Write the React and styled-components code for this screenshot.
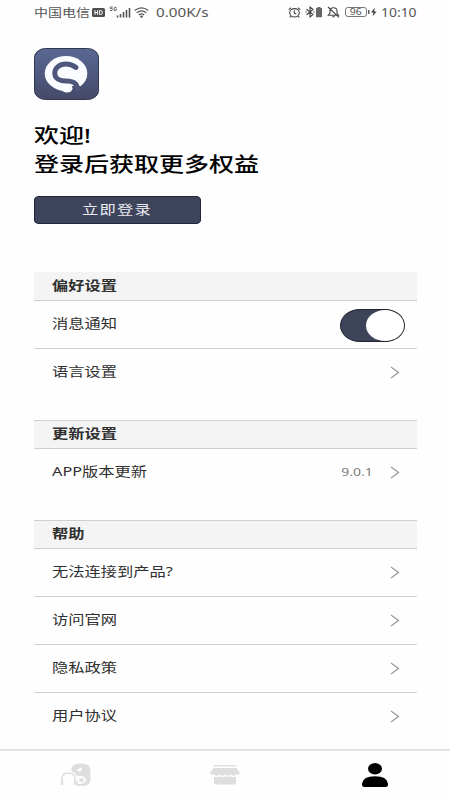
import React, { useState } from 'react';
import styled, { createGlobalStyle } from 'styled-components';

const GlobalStyle = createGlobalStyle`
  * {
    box-sizing: border-box;
  }

  body {
    margin: 0;
    background-color: #fefefe;
    font-family: 'Noto Sans', 'Noto Sans CJK SC', sans-serif;
    color: #303030;
  }
`;

const Screen = styled.div`
  display: flex;
  flex-direction: column;
  width: 450px;
  height: 800px;
  overflow: hidden;
`;

// wide lettering: the glyphs are stretched sideways from one edge
const Wide = styled.span`
  display: block;
  white-space: nowrap;
  transform: scaleX(${(props) => props.$scale || 1.25});
  transform-origin: ${(props) => props.$origin || 'left'} center;
`;

const StatusBar = styled.div`
  display: flex;
  flex-shrink: 0;
  justify-content: space-between;
  align-items: center;
  height: 25px;
  padding: 0 34px 1px 34px;
  font-size: 11.2px;
  color: #555;
`;

const StatusGroup = styled.div`
  display: flex;
  align-items: center;
  height: 100%;
`;

const StatusText = styled.div`
  width: ${(props) => props.$width}px;
  margin-left: ${(props) => props.$gap || 0}px;
  font-size: ${(props) => props.$size || 11.2}px;
`;

const StatusIcon = styled.svg`
  display: block;
  flex-shrink: 0;
  margin-left: ${(props) => props.$gap || 0}px;
`;

const Main = styled.main`
  flex: 1;
  min-height: 0;
  padding: 23px 33px 0 34px;
`;

const Logo = styled.svg`
  display: block;
  width: 65px;
  height: 52px;
`;

const Welcome = styled.h1`
  margin: 21px 0 0;
  font-size: 20px;
  line-height: 29px;
  font-weight: 500;
  color: #000;
`;

const LoginButton = styled.button`
  display: flex;
  align-items: center;
  justify-content: center;
  width: 167px;
  height: 28px;
  margin: 17px 0 48px;
  padding: 0 0 4px;
  border: 1px solid #20253a;
  border-radius: 5px / 4px;
  background-color: #3e445c;
  color: #e9ebf0;
  font-family: inherit;
  font-size: 13px;
  letter-spacing: 1px;
  cursor: pointer;
`;

const Section = styled.section`
  margin-bottom: 23px;
`;

const SectionTitle = styled.h2`
  display: flex;
  align-items: center;
  height: 29px;
  margin: 0;
  padding: 0 0 4px 17.5px;
  border-top: 1px solid ${(props) => (props.$plain ? '#f4f4f4' : '#cfcfcf')};
  border-bottom: 1px solid #cfcfcf;
  background-color: #f4f4f4;
  font-size: 13px;
  font-weight: 700;
`;

const Row = styled.div`
  display: flex;
  align-items: center;
  justify-content: space-between;
  height: 48px;
  padding: 0 17px 4px 17.5px;
  border-bottom: 1px solid #cfcfcf;
  font-size: 13px;

  &:last-child {
    border-bottom-color: transparent;
  }
`;

const RowEnd = styled.div`
  display: flex;
  align-items: center;
  gap: 17px;
`;

const Version = styled.div`
  padding-top: 2px;
  font-size: 10.6px;
  color: #808080;
`;

const Switch = styled.button`
  display: flex;
  justify-content: ${(props) => (props.$on ? 'flex-end' : 'flex-start')};
  width: 65px;
  height: 33px;
  margin: 6px -5px 0 0;
  padding: 0;
  border: 1px solid #22242f;
  border-radius: 20px / 16.5px;
  background-color: ${(props) => (props.$on ? '#3d4359' : '#d8d8d8')};
  cursor: pointer;
`;

const Knob = styled.span`
  width: 38px;
  height: 31px;
  border-radius: 50%;
  background-color: #fff;
`;

const TabBar = styled.nav`
  display: flex;
  flex-shrink: 0;
  height: 51px;
  border-top: 2px solid #e3e3e3;
`;

const Tab = styled.div`
  display: flex;
  flex: 1;
  justify-content: center;
  padding-top: 12px;
  color: ${(props) => (props.$active ? '#000' : '#dedede')};
`;

const ChevronSvg = styled.svg`
  display: block;
  margin-top: 3px;
`;

const Chevron = () => (
  <ChevronSvg width="10" height="13" viewBox="0 0 10 13">
    <path d="M1 1 L8.5 6.5 L1 12" fill="none" stroke="#999" strokeWidth="1.2" />
  </ChevronSvg>
);

const HdIcon = () => (
  <StatusIcon width="13" height="9" viewBox="0 0 13 9" $gap={2}>
    <rect width="13" height="9" rx="1.5" fill="#505050" />
    <path d="M3 2.2v4.6M5.6 2.2v4.6M3 4.5h2.6M7.6 2.5v4h1q1.8 0 1.8-2t-1.8-2z" fill="none" stroke="#fff" strokeWidth="1" />
  </StatusIcon>
);

const SignalIcon = () => (
  <StatusIcon width="22" height="13" viewBox="0 0 22 13" $gap={4}>
    <path d="M3.8 1H1.3v1.5q2.4-.4 2.4 1t-2.7 1M7.6 1.3Q5 .5 5 3t1.5 1.7L7.7 3H6.7" fill="none" stroke="#555" strokeWidth="0.9" />
    <path d="M8.5 9.5v2M11.5 8v3.5M14.5 6v5.5M17.5 4v7.5M20.5 2v9.5" stroke="#555" strokeWidth="1.6" />
  </StatusIcon>
);

const WifiIcon = () => (
  <StatusIcon width="15" height="11" viewBox="0 0 15 11" $gap={3}>
    <g fill="none" stroke="#555" strokeWidth="1.2">
      <path d="M.7 3.4Q7.5-1.6 14.3 3.4" />
      <path d="M2.7 5.7q4.8-3.6 9.6 0" />
      <path d="M4.8 7.9q2.7-2 5.4 0" />
    </g>
    <ellipse cx="7.5" cy="9.7" rx="1.4" ry="1.1" fill="#555" />
  </StatusIcon>
);

const AlarmIcon = () => (
  <StatusIcon width="13" height="11" viewBox="0 0 13 11">
    <g fill="none" stroke="#444" strokeWidth="1.1">
      <ellipse cx="6.5" cy="5.8" rx="4.8" ry="4.2" />
      <path d="M6.3 3.3v2.8l2 1M.7 2.6 3.1.7M12.3 2.6 9.9.7M2.8 9.2 1.7 10.5M10.2 9.2l1.1 1.3" />
    </g>
  </StatusIcon>
);

const BluetoothIcon = () => (
  <StatusIcon width="18" height="12" viewBox="0 0 18 12" $gap={4}>
    <path d="M1.5 3.2 8 8.5 5 11V1l3 2.5-6.5 5.3M.5 6h1.3M8.3 6h1.4" fill="none" stroke="#444" strokeWidth="1.1" />
    <path d="M11 2h1.5V1h3v1H17v9.2h-6z" fill="#666" />
  </StatusIcon>
);

const MutedIcon = () => (
  <StatusIcon width="13" height="12" viewBox="0 0 13 12" $gap={4}>
    <path d="M1.3 9.2h10.2L10 7.3V5Q10 2 6.6 1.8T2.9 5v2.3zM5.2 10.8h2.6M1 1l11 10.3" fill="none" stroke="#444" strokeWidth="1.1" />
  </StatusIcon>
);

const Battery = styled.div`
  display: flex;
  align-items: center;
  justify-content: center;
  width: 22px;
  height: 10px;
  margin-left: 5px;
  border: 1px solid #777;
  border-radius: 3px;
  font-size: 8.5px;
  line-height: 8px;
`;

const ChargeIcon = () => (
  <StatusIcon width="9" height="10" viewBox="0 0 9 10" $gap={1}>
    <path d="M.8 3v4" stroke="#444" strokeWidth="1.3" />
    <path d="M6.8.8 3 5.5h2.4L4.6 9.2 8.7 4.4H6.2z" fill="#444" />
  </StatusIcon>
);

const BrandMark = () => (
  <Logo viewBox="0 0 65 52">
    <defs>
      <linearGradient id="brand" x1="0" y1="0" x2="0" y2="1">
        <stop offset="0" stopColor="#5a6894" />
        <stop offset="1" stopColor="#444a68" />
      </linearGradient>
    </defs>
    <rect x="0.5" y="0.5" width="64" height="51" rx="11" ry="9" fill="url(#brand)" stroke="#30364e" />
    <ellipse cx="32" cy="25.5" rx="21.3" ry="17.5" fill="#fafcff" />
    <path d="M37 38H46L49 45H34z" fill="#474d6e" />
    <path
      d="M42 19.5C38.500 16.800 35 16 32 16C25.500 16 20.800 20 20.800 25.200C20.800 30.500 26 33 32 33C39.500 33 43 35 43.500 41"
      fill="none"
      stroke="#4e577b"
      strokeWidth="5"
      strokeLinecap="round"
    />
    <path d="M32 25.2H43" stroke="#fafcff" strokeWidth="5.500" strokeLinecap="round" />
    <ellipse cx="32" cy="25" rx="6" ry="5" fill="#fafcff" />
    <ellipse cx="33" cy="40.300" rx="5.500" ry="4.300" fill="#fafcff" />
  </Logo>
);

const DevicesIcon = () => (
  <svg width="31" height="24" viewBox="0 0 31 24">
    <path d="M11.5 8Q10 1 20 .5Q30 0 30.5 7V17Q30 23 22 23H17z" fill="currentColor" />
    <path d="M17 8q1-3 5-3.5l-1 4zM17 13q8-1 9 4-1 4-8 4z" fill="#fff" />
    <ellipse cx="21.5" cy="17" rx="2.5" ry="2" fill="currentColor" />
    <ellipse cx="8.5" cy="16" rx="9" ry="8" fill="#fefefe" />
    <path d="M2.5 20Q0 10 8.5 10T14.5 20" fill="none" stroke="currentColor" strokeWidth="1.5" />
    <path d="M2 17v5M15 17v5" stroke="currentColor" strokeWidth="2.2" />
  </svg>
);

const StoreIcon = () => (
  <svg width="30" height="22" viewBox="0 0 30 22">
    <path d="M3.5 2h23v1.5h-23zM3.5 5h23L30 10q-1 2.5-4 1.5-2 2.5-5.5 0-3 2.5-5.5 0-3 2.5-5.5 0-3.5 2.5-5.5 0Q1 12.5 0 10z" fill="currentColor" />
    <path d="M4 13.500q3 1.300 5.500-.3 2.500 1.600 5.500 0 3 1.600 5.500 0 2.500 1.600 5.500.3v6.500q0 1.500-2 1.500H6q-2 0-2-1.500z" fill="currentColor" />
  </svg>
);

const PersonIcon = () => (
  <svg width="26" height="25" viewBox="0 0 26 25">
    <ellipse cx="13" cy="5.7" rx="7" ry="5.7" fill="currentColor" />
    <path d="M0 20.5Q1 13.2 13 13.2T26 20.5V22Q26 24 23.5 24H2.5Q0 24 0 22z" fill="currentColor" />
  </svg>
);

const helpItems = ['无法连接到产品?', '访问官网', '隐私政策', '用户协议'];

const App = () => {
  const [notify, setNotify] = useState(true);

  return (
    <Screen>
      <GlobalStyle />
      <StatusBar>
        <StatusGroup>
          <StatusText $width={56}>
            <Wide>中国电信</Wide>
          </StatusText>
          <HdIcon />
          <SignalIcon />
          <WifiIcon />
          <StatusText $width={53} $gap={7} $size={11.8}>
            <Wide $scale={1.29}>0.00K/s</Wide>
          </StatusText>
        </StatusGroup>
        <StatusGroup>
          <AlarmIcon />
          <BluetoothIcon />
          <MutedIcon />
          <Battery>
            <Wide $origin="center">96</Wide>
          </Battery>
          <ChargeIcon />
          <StatusText $width={35} $gap={4} $size={11.8}>
            <Wide $scale={1.18}>10:10</Wide>
          </StatusText>
        </StatusGroup>
      </StatusBar>

      <Main>
        <BrandMark />
        <Welcome>
          <Wide>欢迎!</Wide>
          <Wide>登录后获取更多权益</Wide>
        </Welcome>
        <LoginButton type="button">
          <Wide $origin="center">立即登录</Wide>
        </LoginButton>

        <Section>
          <SectionTitle $plain>
            <Wide>偏好设置</Wide>
          </SectionTitle>
          <Row>
            <Wide>消息通知</Wide>
            <Switch
              type="button"
              role="switch"
              aria-checked={notify}
              $on={notify}
              onClick={() => setNotify(!notify)}
            >
              <Knob />
            </Switch>
          </Row>
          <Row>
            <Wide>语言设置</Wide>
            <Chevron />
          </Row>
        </Section>

        <Section>
          <SectionTitle>
            <Wide>更新设置</Wide>
          </SectionTitle>
          <Row>
            <Wide>APP版本更新</Wide>
            <RowEnd>
              <Version>
                <Wide $origin="right" $scale={1.32}>9.0.1</Wide>
              </Version>
              <Chevron />
            </RowEnd>
          </Row>
        </Section>

        <Section>
          <SectionTitle>
            <Wide>帮助</Wide>
          </SectionTitle>
          {helpItems.map((item) => (
            <Row key={item}>
              <Wide>{item}</Wide>
              <Chevron />
            </Row>
          ))}
        </Section>
      </Main>

      <TabBar>
        <Tab>
          <DevicesIcon />
        </Tab>
        <Tab>
          <StoreIcon />
        </Tab>
        <Tab $active>
          <PersonIcon />
        </Tab>
      </TabBar>
    </Screen>
  );
};

export default App;
